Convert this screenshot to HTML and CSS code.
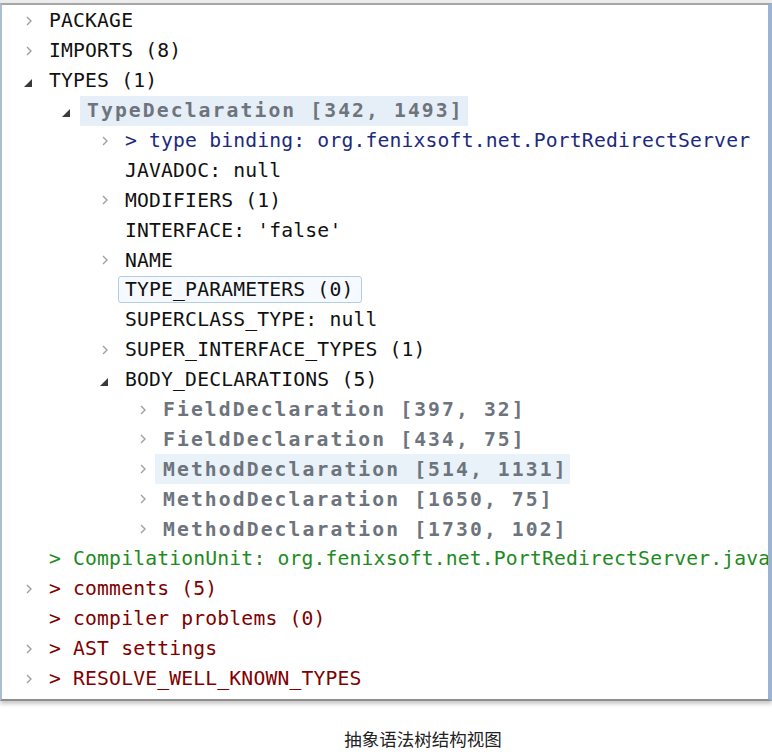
FILE: index.html
```html
<!DOCTYPE html>
<html lang="zh">
<head>
<meta charset="utf-8">
<title>AST View</title>
<link rel="stylesheet" href="styles.css">
</head>
<body>
<div class="topbar"></div>
<div class="panel">
  <div class="row lvl0"><span class="tw"><svg class="chev" viewBox="0 0 8 10"><polyline points="2,1 6,5 2,9"/></svg></span><span class="lbl">PACKAGE</span></div>
  <div class="row lvl0"><span class="tw"><svg class="chev" viewBox="0 0 8 10"><polyline points="2,1 6,5 2,9"/></svg></span><span class="lbl">IMPORTS (8)</span></div>
  <div class="row lvl0"><span class="tw"><svg class="tri" viewBox="0 0 8 8"><polygon points="8,0 8,8 0,8"/></svg></span><span class="lbl">TYPES (1)</span></div>
  <div class="row lvl1"><span class="tw"><svg class="tri" viewBox="0 0 8 8"><polygon points="8,0 8,8 0,8"/></svg></span><span class="lbl node sel">TypeDeclaration [342, 1493]</span></div>
  <div class="row lvl2"><span class="tw"><svg class="chev" viewBox="0 0 8 10"><polyline points="2,1 6,5 2,9"/></svg></span><span class="lbl bind">&gt; type binding: org.fenixsoft.net.PortRedirectServer</span></div>
  <div class="row lvl2"><span class="tw"></span><span class="lbl">JAVADOC: null</span></div>
  <div class="row lvl2"><span class="tw"><svg class="chev" viewBox="0 0 8 10"><polyline points="2,1 6,5 2,9"/></svg></span><span class="lbl">MODIFIERS (1)</span></div>
  <div class="row lvl2"><span class="tw"></span><span class="lbl">INTERFACE: 'false'</span></div>
  <div class="row lvl2"><span class="tw"><svg class="chev" viewBox="0 0 8 10"><polyline points="2,1 6,5 2,9"/></svg></span><span class="lbl">NAME</span></div>
  <div class="row lvl2"><span class="tw"></span><span class="lbl focus">TYPE_PARAMETERS (0)</span></div>
  <div class="row lvl2"><span class="tw"></span><span class="lbl">SUPERCLASS_TYPE: null</span></div>
  <div class="row lvl2"><span class="tw"><svg class="chev" viewBox="0 0 8 10"><polyline points="2,1 6,5 2,9"/></svg></span><span class="lbl">SUPER_INTERFACE_TYPES (1)</span></div>
  <div class="row lvl2"><span class="tw"><svg class="tri" viewBox="0 0 8 8"><polygon points="8,0 8,8 0,8"/></svg></span><span class="lbl">BODY_DECLARATIONS (5)</span></div>
  <div class="row lvl3"><span class="tw"><svg class="chev" viewBox="0 0 8 10"><polyline points="2,1 6,5 2,9"/></svg></span><span class="lbl node">FieldDeclaration [397, 32]</span></div>
  <div class="row lvl3"><span class="tw"><svg class="chev" viewBox="0 0 8 10"><polyline points="2,1 6,5 2,9"/></svg></span><span class="lbl node">FieldDeclaration [434, 75]</span></div>
  <div class="row lvl3"><span class="tw"><svg class="chev" viewBox="0 0 8 10"><polyline points="2,1 6,5 2,9"/></svg></span><span class="lbl node hover">MethodDeclaration [514, 1131]</span></div>
  <div class="row lvl3"><span class="tw"><svg class="chev" viewBox="0 0 8 10"><polyline points="2,1 6,5 2,9"/></svg></span><span class="lbl node">MethodDeclaration [1650, 75]</span></div>
  <div class="row lvl3"><span class="tw"><svg class="chev" viewBox="0 0 8 10"><polyline points="2,1 6,5 2,9"/></svg></span><span class="lbl node">MethodDeclaration [1730, 102]</span></div>
  <div class="row lvl0"><span class="tw"></span><span class="lbl unit">&gt; CompilationUnit: org.fenixsoft.net.PortRedirectServer.java</span></div>
  <div class="row lvl0"><span class="tw"><svg class="chev" viewBox="0 0 8 10"><polyline points="2,1 6,5 2,9"/></svg></span><span class="lbl extra">&gt; comments (5)</span></div>
  <div class="row lvl0"><span class="tw"></span><span class="lbl extra">&gt; compiler problems (0)</span></div>
  <div class="row lvl0"><span class="tw"><svg class="chev" viewBox="0 0 8 10"><polyline points="2,1 6,5 2,9"/></svg></span><span class="lbl extra">&gt; AST settings</span></div>
  <div class="row lvl0"><span class="tw"><svg class="chev" viewBox="0 0 8 10"><polyline points="2,1 6,5 2,9"/></svg></span><span class="lbl extra">&gt; RESOLVE_WELL_KNOWN_TYPES</span></div>
</div>
<div class="caption">抽象语法树结构视图</div>
</body>
</html>
```

FILE: styles.css
```css
html, body {
  margin: 0;
  padding: 0;
  background: #ffffff;
}

body {
  width: 772px;
  font-family: "DejaVu Sans Mono", "Liberation Mono", monospace;
}

.topbar {
  height: 3px;
  background: #ececec;
}

.panel {
  box-sizing: border-box;
  width: 772px;
  height: 698px;
  padding-top: 1px;
  border-top: 2px solid #a6a6a6;
  border-left: 2px solid #abbdd4;
  border-right: 4px solid #9cb4d3;
  border-bottom: 2px solid #8e8e8e;
  box-shadow: 0 3px 4px rgba(0, 0, 0, 0.22);
  overflow: hidden;
  white-space: nowrap;
  background: #fff;
}

.row {
  display: flex;
  align-items: center;
  height: 29.9px;
  font-size: 19.7px;
  letter-spacing: 0.17px;
  color: #111;
}

.lvl0 { padding-left: 20px; }
.lvl1 { padding-left: 58px; }
.lvl2 { padding-left: 96px; }
.lvl3 { padding-left: 134px; }

.tw {
  flex: 0 0 27px;
  display: flex;
  align-items: center;
  height: 100%;
}

.chev {
  width: 8px;
  height: 10px;
  margin-left: 3px;
  fill: none;
  stroke: #a0a0a0;
  stroke-width: 1.4;
}

.tri {
  width: 8px;
  height: 8px;
  margin-left: 2px;
  margin-top: 4px;
  fill: #3a3a3a;
}

.lbl {
  display: flex;
  align-items: center;
  height: 100%;
}

.node {
  font-weight: bold;
  letter-spacing: 2.1px;
  color: #6d747d;
}

.sel {
  background: #e6eef7;
  margin-left: -7px;
  padding: 0 4px 0 7px;
}

.hover {
  background: #e9f1f9;
  margin-left: -8px;
  padding: 0 2px 0 8px;
}

.focus {
  box-sizing: border-box;
  height: 27px;
  margin-left: -7px;
  padding: 0 8px 0 6px;
  border: 1px solid #b2cde6;
  border-radius: 3px;
  background: #f6f9fd;
}

.bind { color: #1c2a7e; }
.unit { color: #218a21; }
.extra { color: #800000; }

.caption {
  margin-top: 27px;
  padding-left: 74px;
  text-align: center;
  font-family: "Noto Sans CJK SC", sans-serif;
  font-size: 17.5px;
  line-height: 22px;
  color: #222;
}
```
